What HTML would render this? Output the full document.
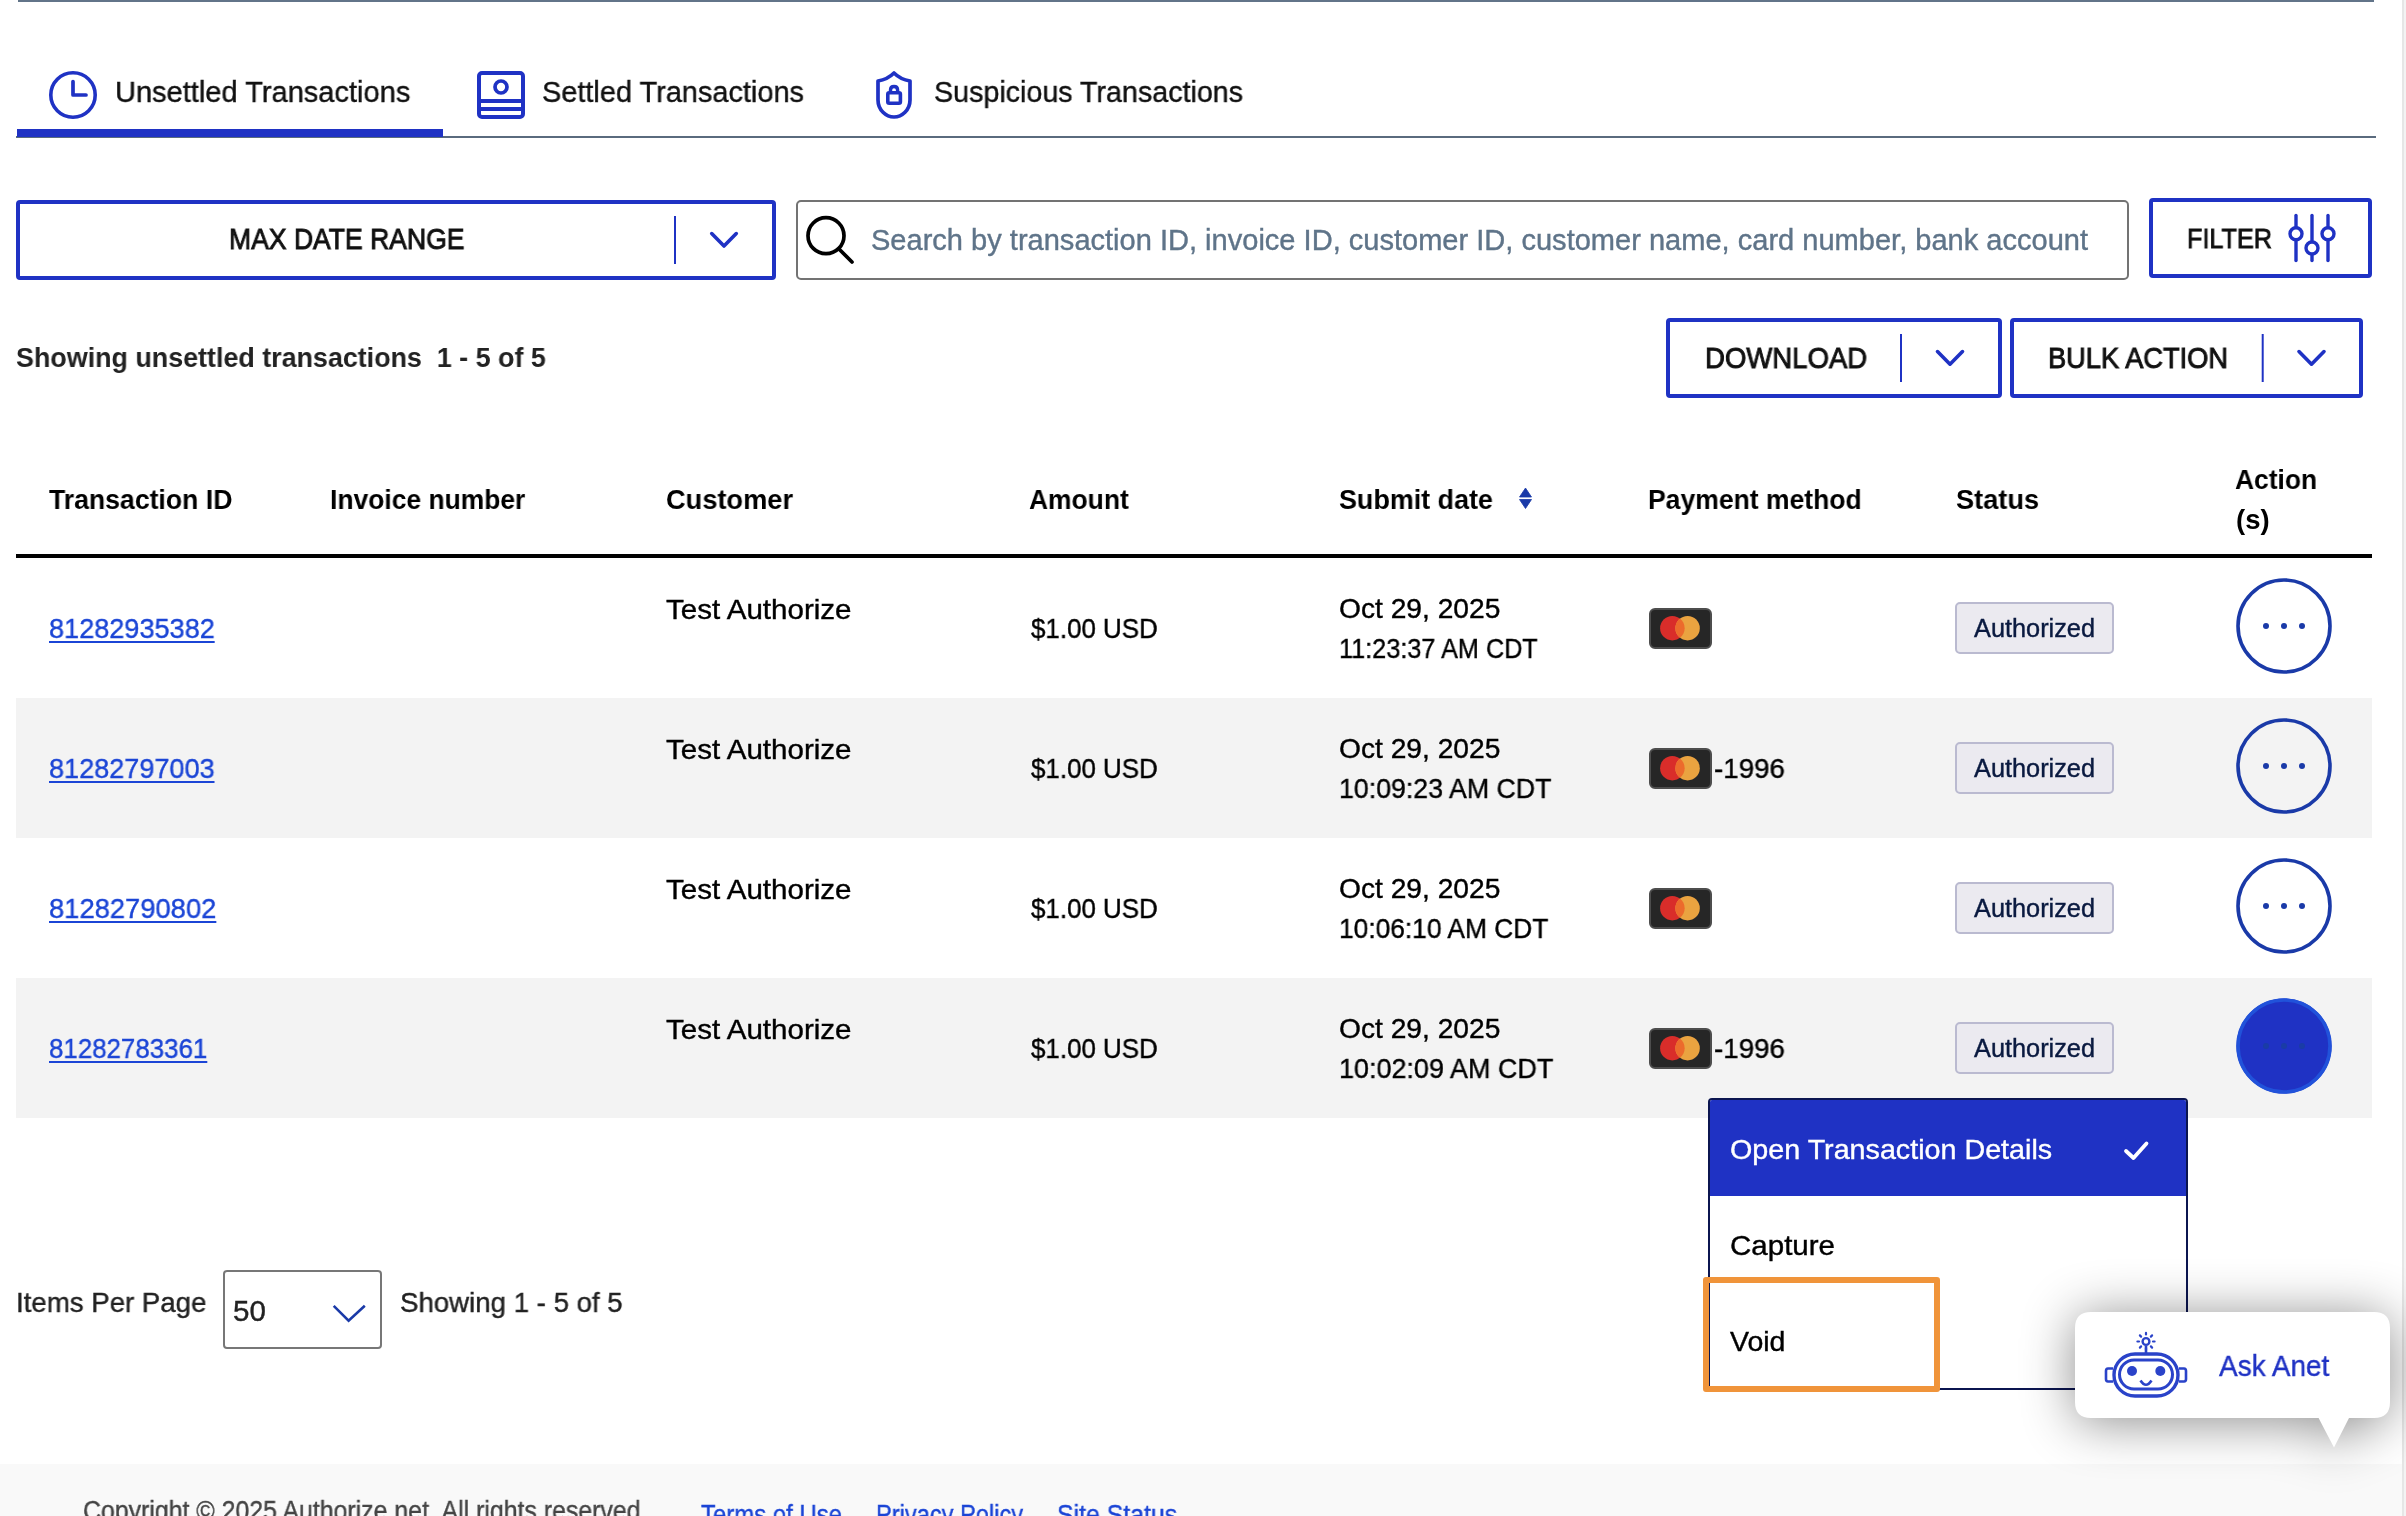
<!DOCTYPE html>
<html><head><meta charset="utf-8"><style>
html,body{margin:0;padding:0;background:#fff;}
body{width:2406px;height:1516px;position:relative;overflow:hidden;font-family:"Liberation Sans", sans-serif;}
.a{position:absolute;}
.t{position:absolute;white-space:pre;line-height:1;font-family:"Liberation Sans", sans-serif;transform-origin:0 0;will-change:transform;}
</style></head><body>
<div class="a" style="left:18px;top:0;width:2356px;height:2px;background:#627489"></div><div class="a" style="left:2402px;top:0;width:2px;height:1516px;background:#e6e6e6"></div><div class="a" style="left:2404px;top:0;width:2px;height:1516px;background:#f3f3f3"></div><div class="a" style="left:16px;top:136px;width:2360px;height:2px;background:#5a6b7e"></div><div class="a" style="left:17px;top:129px;width:426px;height:8px;background:#1f32c4"></div><div class="a" style="left:16px;top:200px;width:760px;height:80px;box-sizing:border-box;border:4px solid #1f32c4;border-radius:4px"></div><div class="a" style="left:796px;top:200px;width:1333px;height:80px;box-sizing:border-box;border:2px solid #737373;border-radius:5px"></div><div class="a" style="left:2149px;top:198px;width:223px;height:80px;box-sizing:border-box;border:4px solid #1f32c4;border-radius:4px"></div><div class="a" style="left:1666px;top:318px;width:336px;height:80px;box-sizing:border-box;border:4px solid #1f32c4;border-radius:4px"></div><div class="a" style="left:2010px;top:318px;width:353px;height:80px;box-sizing:border-box;border:4px solid #1f32c4;border-radius:4px"></div><div class="a" style="left:16px;top:554px;width:2356px;height:4px;background:#000"></div><div class="a" style="left:16px;top:698px;width:2356px;height:140px;background:#f3f3f3"></div><div class="a" style="left:16px;top:978px;width:2356px;height:140px;background:#f3f3f3"></div><div class="a" style="left:1648.5px;top:607.8px;width:63px;height:41px;box-sizing:border-box;border:2px solid #4d4d4d;border-radius:6px;background:#262626"></div><div class="a" style="left:1955px;top:602px;width:159px;height:52px;box-sizing:border-box;border:2px solid #babad0;border-radius:5px;background:#ebeaf0"></div><div class="a" style="left:1648.5px;top:747.8px;width:63px;height:41px;box-sizing:border-box;border:2px solid #4d4d4d;border-radius:6px;background:#262626"></div><div class="a" style="left:1955px;top:742px;width:159px;height:52px;box-sizing:border-box;border:2px solid #babad0;border-radius:5px;background:#ebeaf0"></div><div class="a" style="left:1648.5px;top:887.8px;width:63px;height:41px;box-sizing:border-box;border:2px solid #4d4d4d;border-radius:6px;background:#262626"></div><div class="a" style="left:1955px;top:882px;width:159px;height:52px;box-sizing:border-box;border:2px solid #babad0;border-radius:5px;background:#ebeaf0"></div><div class="a" style="left:1648.5px;top:1027.8px;width:63px;height:41px;box-sizing:border-box;border:2px solid #4d4d4d;border-radius:6px;background:#262626"></div><div class="a" style="left:1955px;top:1022px;width:159px;height:52px;box-sizing:border-box;border:2px solid #babad0;border-radius:5px;background:#ebeaf0"></div><div class="a" style="left:223px;top:1270px;width:159px;height:79px;box-sizing:border-box;border:2px solid #777;border-radius:4px"></div><div class="a" style="left:0;top:1464px;width:2402px;height:52px;background:#f9f9f9"></div>
<svg class="a" style="left:0;top:0" width="2406" height="1516"><circle cx="73" cy="95" r="22.2" fill="none" stroke="#1f32c4" stroke-width="3.6"/><polyline points="73,81.5 73,95 86,95" fill="none" stroke="#1f32c4" stroke-width="3.7" stroke-linecap="round" stroke-linejoin="round"/><rect x="479" y="73" width="44" height="44" rx="3" fill="none" stroke="#1f32c4" stroke-width="4"/><line x1="479" y1="101" x2="523" y2="101" stroke="#1f32c4" stroke-width="4"/><line x1="479" y1="109" x2="523" y2="109" stroke="#1f32c4" stroke-width="4"/><circle cx="501" cy="87" r="6" fill="none" stroke="#1f32c4" stroke-width="3.7"/><path d="M894,73 C889,78 884,80 878,81 L878,100 C878,110 886,117 894,117 C902,117 910,110 910,100 L910,81 C904,80 899,78 894,73 Z" fill="none" stroke="#1f32c4" stroke-width="3.7" stroke-linejoin="round"/><rect x="887.8" y="92.8" width="12.6" height="10.4" rx="1.5" fill="none" stroke="#1f32c4" stroke-width="3.6"/><path d="M890.5,92 L890.5,90 C890.5,87.5 892,86.5 894,86.5 C896,86.5 897.6,87.5 897.6,90 L897.6,92" fill="none" stroke="#1f32c4" stroke-width="3.4"/><line x1="675" y1="216" x2="675" y2="264" stroke="#1f32c4" stroke-width="2"/><polyline points="711.7,233.6 724,246 736.3,233.6" fill="none" stroke="#1f32c4" stroke-width="3.6" stroke-linecap="round" stroke-linejoin="round"/><circle cx="826" cy="235.7" r="18" fill="none" stroke="#000" stroke-width="3.7"/><line x1="839" y1="249" x2="852" y2="262" stroke="#000" stroke-width="3.7" stroke-linecap="round"/><line x1="2296" y1="215.5" x2="2296" y2="260.5" stroke="#1f32c4" stroke-width="3.4" stroke-linecap="round"/><line x1="2312" y1="215.5" x2="2312" y2="260.5" stroke="#1f32c4" stroke-width="3.4" stroke-linecap="round"/><line x1="2328" y1="215.5" x2="2328" y2="260.5" stroke="#1f32c4" stroke-width="3.4" stroke-linecap="round"/><circle cx="2296" cy="233.8" r="6" fill="#fff" stroke="#1f32c4" stroke-width="3.4"/><circle cx="2312" cy="248" r="6" fill="#fff" stroke="#1f32c4" stroke-width="3.4"/><circle cx="2328" cy="233.8" r="6" fill="#fff" stroke="#1f32c4" stroke-width="3.4"/><line x1="1901" y1="334" x2="1901" y2="382" stroke="#1f32c4" stroke-width="2"/><polyline points="1937.5,351.6 1950,364.2 1962.5,351.6" fill="none" stroke="#1f32c4" stroke-width="3.6" stroke-linecap="round" stroke-linejoin="round"/><line x1="2262.7" y1="334" x2="2262.7" y2="382" stroke="#1f32c4" stroke-width="2"/><polyline points="2299,351.6 2311.5,364.2 2324,351.6" fill="none" stroke="#1f32c4" stroke-width="3.6" stroke-linecap="round" stroke-linejoin="round"/><path d="M1519.5,497 L1525.5,488 L1531.5,497 Z M1519.5,499.5 L1525.5,508.5 L1531.5,499.5 Z" fill="#1a3aa8" stroke="#1a3aa8" stroke-width="0.8" stroke-linejoin="round"/><polyline points="333.7,1305.8 348.6,1320.7 364.8,1305.8" fill="none" stroke="#1a3aa8" stroke-width="2.6" stroke-linejoin="miter"/><polyline points="2126,1151 2133.5,1158 2146.5,1143.5" fill="none" stroke="#fff" stroke-width="3.8" stroke-linecap="round" stroke-linejoin="round"/><circle cx="1672.3" cy="628.2" r="12.2" fill="#d92d2a"/><circle cx="1687.6" cy="628.2" r="12.2" fill="#eaa340"/><path d="M1680,618.6 A12.2,12.2 0 0 1 1680,637.8000000000001 A12.2,12.2 0 0 1 1680,618.6 Z" fill="#ec6b2c"/><circle cx="2284" cy="626" r="46" fill="none" stroke="#1a3aa8" stroke-width="3.6"/><circle cx="2266" cy="626" r="3" fill="#1a3aa8"/><circle cx="2284" cy="626" r="3" fill="#1a3aa8"/><circle cx="2302" cy="626" r="3" fill="#1a3aa8"/><circle cx="1672.3" cy="768.2" r="12.2" fill="#d92d2a"/><circle cx="1687.6" cy="768.2" r="12.2" fill="#eaa340"/><path d="M1680,758.6 A12.2,12.2 0 0 1 1680,777.8000000000001 A12.2,12.2 0 0 1 1680,758.6 Z" fill="#ec6b2c"/><circle cx="2284" cy="766" r="46" fill="none" stroke="#1a3aa8" stroke-width="3.6"/><circle cx="2266" cy="766" r="3" fill="#1a3aa8"/><circle cx="2284" cy="766" r="3" fill="#1a3aa8"/><circle cx="2302" cy="766" r="3" fill="#1a3aa8"/><circle cx="1672.3" cy="908.2" r="12.2" fill="#d92d2a"/><circle cx="1687.6" cy="908.2" r="12.2" fill="#eaa340"/><path d="M1680,898.6 A12.2,12.2 0 0 1 1680,917.8000000000001 A12.2,12.2 0 0 1 1680,898.6 Z" fill="#ec6b2c"/><circle cx="2284" cy="906" r="46" fill="none" stroke="#1a3aa8" stroke-width="3.6"/><circle cx="2266" cy="906" r="3" fill="#1a3aa8"/><circle cx="2284" cy="906" r="3" fill="#1a3aa8"/><circle cx="2302" cy="906" r="3" fill="#1a3aa8"/><circle cx="1672.3" cy="1048.2" r="12.2" fill="#d92d2a"/><circle cx="1687.6" cy="1048.2" r="12.2" fill="#eaa340"/><path d="M1680,1038.6000000000001 A12.2,12.2 0 0 1 1680,1057.8 A12.2,12.2 0 0 1 1680,1038.6000000000001 Z" fill="#ec6b2c"/><circle cx="2284" cy="1046" r="47.5" fill="#1f32c4"/><circle cx="2284" cy="1046" r="46" fill="none" stroke="#2152da" stroke-width="3.6"/><circle cx="2266" cy="1046" r="3" fill="#1a3ca6"/><circle cx="2284" cy="1046" r="3" fill="#1a3ca6"/><circle cx="2302" cy="1046" r="3" fill="#1a3ca6"/></svg>
<div class="t" style="left:114.7px;top:76.8px;font-size:30px;font-weight:400;color:#111;transform:scaleX(0.9677);-webkit-text-stroke:0.4px #111;">Unsettled Transactions</div><div class="t" style="left:541.5px;top:76.8px;font-size:30px;font-weight:400;color:#111;transform:scaleX(0.9638);-webkit-text-stroke:0.4px #111;">Settled Transactions</div><div class="t" style="left:934.0px;top:76.8px;font-size:30px;font-weight:400;color:#111;transform:scaleX(0.9552);-webkit-text-stroke:0.4px #111;">Suspicious Transactions</div><div class="t" style="left:229.4px;top:224.8px;font-size:29px;font-weight:400;color:#111;transform:scaleX(0.9150);-webkit-text-stroke:0.9px #111;">MAX DATE RANGE</div><div class="t" style="left:871.2px;top:226.2px;font-size:29px;font-weight:400;color:#5f7489;transform:scaleX(1.0014);-webkit-text-stroke:0.4px #5f7489;">Search by transaction ID, invoice ID, customer ID, customer name, card number, bank account</div><div class="t" style="left:2186.6px;top:223.9px;font-size:28.5px;font-weight:400;color:#111;transform:scaleX(0.8848);-webkit-text-stroke:0.9px #111;">FILTER</div><div class="t" style="left:16.2px;top:343.7px;font-size:28px;font-weight:700;color:#222;transform:scaleX(0.9592);">Showing unsettled transactions  1 - 5 of 5</div><div class="t" style="left:1704.5px;top:343.6px;font-size:29px;font-weight:400;color:#111;transform:scaleX(0.9497);-webkit-text-stroke:0.9px #111;">DOWNLOAD</div><div class="t" style="left:2048.0px;top:343.7px;font-size:29px;font-weight:400;color:#111;transform:scaleX(0.9386);-webkit-text-stroke:0.9px #111;">BULK ACTION</div><div class="t" style="left:48.6px;top:485.8px;font-size:27.5px;font-weight:700;color:#000;transform:scaleX(0.9678);">Transaction ID</div><div class="t" style="left:329.7px;top:485.8px;font-size:27.5px;font-weight:700;color:#000;transform:scaleX(0.9609);">Invoice number</div><div class="t" style="left:666.0px;top:485.8px;font-size:27.5px;font-weight:700;color:#000;transform:scaleX(0.9894);">Customer</div><div class="t" style="left:1029.4px;top:485.8px;font-size:27.5px;font-weight:700;color:#000;transform:scaleX(0.9608);">Amount</div><div class="t" style="left:1338.7px;top:485.8px;font-size:27.5px;font-weight:700;color:#000;transform:scaleX(0.9779);">Submit date</div><div class="t" style="left:1647.6px;top:485.8px;font-size:27.5px;font-weight:700;color:#000;transform:scaleX(0.9644);">Payment method</div><div class="t" style="left:1955.8px;top:485.8px;font-size:27.5px;font-weight:700;color:#000;transform:scaleX(0.9887);">Status</div><div class="t" style="left:2234.8px;top:466.0px;font-size:27.5px;font-weight:700;color:#000;transform:scaleX(0.9595);">Action</div><div class="t" style="left:2236.0px;top:506.2px;font-size:27.5px;font-weight:700;color:#000;transform:scaleX(1.0000);">(s)</div><div class="t" style="left:48.7px;top:615.2px;font-size:28px;font-weight:400;color:#1b45d6;transform:scaleX(0.9679);-webkit-text-stroke:0.4px #1b45d6;text-decoration:underline;text-decoration-thickness:2px;text-underline-offset:3px;">81282935382</div><div class="t" style="left:665.5px;top:595.6px;font-size:28px;font-weight:400;color:#000;transform:scaleX(1.0547);-webkit-text-stroke:0.4px #000;">Test Authorize</div><div class="t" style="left:1030.6px;top:615.3px;font-size:28px;font-weight:400;color:#000;transform:scaleX(0.9258);-webkit-text-stroke:0.4px #000;">$1.00 USD</div><div class="t" style="left:1338.7px;top:595.1px;font-size:28px;font-weight:400;color:#000;transform:scaleX(1.0060);-webkit-text-stroke:0.4px #000;">Oct 29, 2025</div><div class="t" style="left:1338.7px;top:635.0px;font-size:28px;font-weight:400;color:#000;transform:scaleX(0.9017);-webkit-text-stroke:0.4px #000;">11:23:37 AM CDT</div><div class="t" style="left:1973.7px;top:615.9px;font-size:25px;font-weight:400;color:#0a1a40;transform:scaleX(1.0123);-webkit-text-stroke:0.4px #0a1a40;">Authorized</div><div class="t" style="left:48.7px;top:755.2px;font-size:28px;font-weight:400;color:#1b45d6;transform:scaleX(0.9667);-webkit-text-stroke:0.4px #1b45d6;text-decoration:underline;text-decoration-thickness:2px;text-underline-offset:3px;">81282797003</div><div class="t" style="left:665.5px;top:735.6px;font-size:28px;font-weight:400;color:#000;transform:scaleX(1.0547);-webkit-text-stroke:0.4px #000;">Test Authorize</div><div class="t" style="left:1030.6px;top:755.3px;font-size:28px;font-weight:400;color:#000;transform:scaleX(0.9258);-webkit-text-stroke:0.4px #000;">$1.00 USD</div><div class="t" style="left:1338.7px;top:735.1px;font-size:28px;font-weight:400;color:#000;transform:scaleX(1.0060);-webkit-text-stroke:0.4px #000;">Oct 29, 2025</div><div class="t" style="left:1338.7px;top:775.0px;font-size:28px;font-weight:400;color:#000;transform:scaleX(0.9543);-webkit-text-stroke:0.4px #000;">10:09:23 AM CDT</div><div class="t" style="left:1713.9px;top:755.1px;font-size:28px;font-weight:400;color:#000;transform:scaleX(0.9899);-webkit-text-stroke:0.4px #000;">-1996</div><div class="t" style="left:1973.7px;top:755.9px;font-size:25px;font-weight:400;color:#0a1a40;transform:scaleX(1.0123);-webkit-text-stroke:0.4px #0a1a40;">Authorized</div><div class="t" style="left:48.7px;top:895.2px;font-size:28px;font-weight:400;color:#1b45d6;transform:scaleX(0.9767);-webkit-text-stroke:0.4px #1b45d6;text-decoration:underline;text-decoration-thickness:2px;text-underline-offset:3px;">81282790802</div><div class="t" style="left:665.5px;top:875.6px;font-size:28px;font-weight:400;color:#000;transform:scaleX(1.0547);-webkit-text-stroke:0.4px #000;">Test Authorize</div><div class="t" style="left:1030.6px;top:895.3px;font-size:28px;font-weight:400;color:#000;transform:scaleX(0.9258);-webkit-text-stroke:0.4px #000;">$1.00 USD</div><div class="t" style="left:1338.7px;top:875.1px;font-size:28px;font-weight:400;color:#000;transform:scaleX(1.0060);-webkit-text-stroke:0.4px #000;">Oct 29, 2025</div><div class="t" style="left:1338.7px;top:915.0px;font-size:28px;font-weight:400;color:#000;transform:scaleX(0.9404);-webkit-text-stroke:0.4px #000;">10:06:10 AM CDT</div><div class="t" style="left:1973.7px;top:895.9px;font-size:25px;font-weight:400;color:#0a1a40;transform:scaleX(1.0123);-webkit-text-stroke:0.4px #0a1a40;">Authorized</div><div class="t" style="left:48.7px;top:1035.2px;font-size:28px;font-weight:400;color:#1b45d6;transform:scaleX(0.9241);-webkit-text-stroke:0.4px #1b45d6;text-decoration:underline;text-decoration-thickness:2px;text-underline-offset:3px;">81282783361</div><div class="t" style="left:665.5px;top:1015.6px;font-size:28px;font-weight:400;color:#000;transform:scaleX(1.0547);-webkit-text-stroke:0.4px #000;">Test Authorize</div><div class="t" style="left:1030.6px;top:1035.3px;font-size:28px;font-weight:400;color:#000;transform:scaleX(0.9258);-webkit-text-stroke:0.4px #000;">$1.00 USD</div><div class="t" style="left:1338.7px;top:1015.1px;font-size:28px;font-weight:400;color:#000;transform:scaleX(1.0060);-webkit-text-stroke:0.4px #000;">Oct 29, 2025</div><div class="t" style="left:1338.7px;top:1055.0px;font-size:28px;font-weight:400;color:#000;transform:scaleX(0.9629);-webkit-text-stroke:0.4px #000;">10:02:09 AM CDT</div><div class="t" style="left:1713.9px;top:1035.1px;font-size:28px;font-weight:400;color:#000;transform:scaleX(0.9899);-webkit-text-stroke:0.4px #000;">-1996</div><div class="t" style="left:1973.7px;top:1035.9px;font-size:25px;font-weight:400;color:#0a1a40;transform:scaleX(1.0123);-webkit-text-stroke:0.4px #0a1a40;">Authorized</div><div class="t" style="left:15.5px;top:1288.6px;font-size:28px;font-weight:400;color:#222;transform:scaleX(0.9866);-webkit-text-stroke:0.4px #222;">Items Per Page</div><div class="t" style="left:233.0px;top:1295.7px;font-size:29.5px;font-weight:400;color:#222;transform:scaleX(1.0000);-webkit-text-stroke:0.4px #222;">50</div><div class="t" style="left:400.0px;top:1288.6px;font-size:28px;font-weight:400;color:#222;transform:scaleX(0.9867);-webkit-text-stroke:0.4px #222;">Showing 1 - 5 of 5</div><div class="t" style="left:83.0px;top:1497.9px;font-size:27px;font-weight:400;color:#444;transform:scaleX(0.9211);-webkit-text-stroke:0.4px #444;">Copyright © 2025 Authorize.net. All rights reserved.</div><div class="t" style="left:701.0px;top:1502.1px;font-size:27px;font-weight:400;color:#1b45d6;transform:scaleX(0.8865);-webkit-text-stroke:0.4px #1b45d6;">Terms of Use</div><div class="t" style="left:875.7px;top:1502.1px;font-size:27px;font-weight:400;color:#1b45d6;transform:scaleX(0.8754);-webkit-text-stroke:0.4px #1b45d6;">Privacy Policy</div><div class="t" style="left:1056.5px;top:1502.1px;font-size:27px;font-weight:400;color:#1b45d6;transform:scaleX(0.9205);-webkit-text-stroke:0.4px #1b45d6;">Site Status</div>
<div class="a" style="left:1708px;top:1098px;width:480px;height:292px;box-sizing:border-box;border:2px solid #0b1550;border-radius:4px;background:#fff;overflow:hidden"><div style="position:absolute;left:0;top:0;width:100%;height:96px;background:#1f32c4"></div></div>
<div class="t" style="left:1730.3px;top:1135.4px;font-size:28.5px;font-weight:400;color:#fff;transform:scaleX(1.0066);-webkit-text-stroke:0.4px #fff;">Open Transaction Details</div><div class="t" style="left:1730.3px;top:1231.4px;font-size:28.5px;font-weight:400;color:#000;transform:scaleX(1.0354);-webkit-text-stroke:0.4px #000;">Capture</div><div class="t" style="left:1730.3px;top:1326.9px;font-size:28.5px;font-weight:400;color:#000;transform:scaleX(1.0000);-webkit-text-stroke:0.4px #000;">Void</div><svg class="a" style="left:0;top:0" width="2406" height="1516"><polyline points="2126,1151 2133.5,1158 2146.5,1143.5" fill="none" stroke="#fff" stroke-width="3.8" stroke-linecap="round" stroke-linejoin="round"/></svg>
<div class="a" style="left:1703px;top:1277px;width:237px;height:115px;box-sizing:border-box;border:6px solid #f0943a;border-radius:3px"></div>
<svg class="a" style="left:0;top:0;overflow:visible;filter:drop-shadow(0 4px 26px rgba(0,0,0,0.45))" width="2406" height="1516"><path d="M2091,1312 L2374,1312 Q2390,1312 2390,1328 L2390,1402 Q2390,1418 2374,1418 L2349,1418 L2334,1447.6 L2318.6,1418 L2091,1418 Q2075,1418 2075,1402 L2075,1328 Q2075,1312 2091,1312 Z" fill="#fff"/></svg>
<svg class="a" style="left:0;top:0" width="2406" height="1516"><rect x="2114" y="1354" width="64" height="42" rx="21" fill="none" stroke="#2a43c9" stroke-width="3.4"/><rect x="2119.5" y="1360" width="53" height="29" rx="14.5" fill="none" stroke="#2a43c9" stroke-width="3"/><path d="M2113,1368.5 L2108,1368.5 Q2106,1368.5 2106,1371 L2106,1379 Q2106,1381.5 2108,1381.5 L2113,1381.5" fill="none" stroke="#2a43c9" stroke-width="2.6"/><path d="M2179,1368.5 L2184,1368.5 Q2186,1368.5 2186,1371 L2186,1379 Q2186,1381.5 2184,1381.5 L2179,1381.5" fill="none" stroke="#2a43c9" stroke-width="2.6"/><circle cx="2132" cy="1371" r="5" fill="#2a43c9"/><circle cx="2160.3" cy="1371" r="5" fill="#2a43c9"/><path d="M2140.5,1380.5 Q2146,1389 2151.5,1380.5" fill="none" stroke="#2a43c9" stroke-width="2.6"/><line x1="2146" y1="1346" x2="2146" y2="1353" stroke="#2a43c9" stroke-width="2.6"/><circle cx="2146" cy="1341.5" r="3.4" fill="none" stroke="#2a43c9" stroke-width="2.4"/><line x1="2153.0" y1="1341.5" x2="2154.6" y2="1341.5" stroke="#2a43c9" stroke-width="2.2" stroke-linecap="round"/><line x1="2150.9" y1="1346.4" x2="2152.1" y2="1347.6" stroke="#2a43c9" stroke-width="2.2" stroke-linecap="round"/><line x1="2146.0" y1="1348.5" x2="2146.0" y2="1350.1" stroke="#2a43c9" stroke-width="2.2" stroke-linecap="round"/><line x1="2141.1" y1="1346.4" x2="2139.9" y2="1347.6" stroke="#2a43c9" stroke-width="2.2" stroke-linecap="round"/><line x1="2139.0" y1="1341.5" x2="2137.4" y2="1341.5" stroke="#2a43c9" stroke-width="2.2" stroke-linecap="round"/><line x1="2141.1" y1="1336.6" x2="2139.9" y2="1335.4" stroke="#2a43c9" stroke-width="2.2" stroke-linecap="round"/><line x1="2146.0" y1="1334.5" x2="2146.0" y2="1332.9" stroke="#2a43c9" stroke-width="2.2" stroke-linecap="round"/><line x1="2150.9" y1="1336.6" x2="2152.1" y2="1335.4" stroke="#2a43c9" stroke-width="2.2" stroke-linecap="round"/></svg>
<div class="t" style="left:2219.4px;top:1351.1px;font-size:29.5px;font-weight:400;color:#1f32c4;transform:scaleX(0.9473);-webkit-text-stroke:0.4px #1f32c4;">Ask Anet</div>
</body></html>
